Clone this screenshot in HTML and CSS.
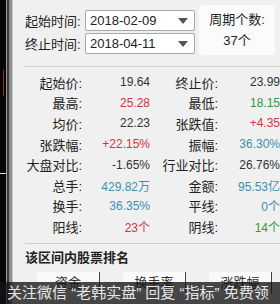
FILE: index.html
```html
<!DOCTYPE html>
<html lang="zh-CN">
<head>
    <meta charset="UTF-8">
    <meta name="viewport" content="width=device-width, initial-scale=1.0">
    <title>区间统计</title>
    <link rel="stylesheet" href="styles.css">
</head>
<body>

    <div class="window">
        <!-- Chart edge on the left -->
        <div class="chart-edge">
            <span class="chart-red"></span>
            <span class="chart-tick"></span>
        </div>
        <div class="edge-bar"></div>

        <div class="panel">
            <!-- Date range -->
            <div class="range">
                <div class="dates">
                    <div class="date-row">
                        <span class="date-label">起始时间:</span>
                        <div class="date-select">2018-02-09<span class="arrow"></span></div>
                    </div>
                    <div class="date-row">
                        <span class="date-label">终止时间:</span>
                        <div class="date-select">2018-04-11<span class="arrow"></span></div>
                    </div>
                </div>
                <div class="period-box">
                    <div>周期个数:</div>
                    <div>37个</div>
                </div>
            </div>

            <div class="divider"></div>

            <!-- Statistics -->
            <div class="stats">
                <span class="lbl">起始价:</span><span class="val">19.64</span>
                <span class="lbl">终止价:</span><span class="val">23.99</span>

                <span class="lbl">最高:</span><span class="val up">25.28</span>
                <span class="lbl">最低:</span><span class="val down">18.15</span>

                <span class="lbl">均价:</span><span class="val">22.23</span>
                <span class="lbl">张跌值:</span><span class="val up">+4.35</span>

                <span class="lbl">张跌幅:</span><span class="val up">+22.15%</span>
                <span class="lbl">振幅:</span><span class="val blue">36.30%</span>

                <span class="lbl">大盘对比:</span><span class="val">-1.65%</span>
                <span class="lbl">行业对比:</span><span class="val">26.76%</span>

                <span class="lbl">总手:</span><span class="val blue">429.82万</span>
                <span class="lbl">金额:</span><span class="val blue">95.53亿</span>

                <span class="lbl">换手:</span><span class="val blue">36.35%</span>
                <span class="lbl">平线:</span><span class="val blue">0个</span>

                <span class="lbl">阳线:</span><span class="val up">23个</span>
                <span class="lbl">阴线:</span><span class="val down">14个</span>
            </div>

            <div class="divider"></div>

            <!-- Ranking -->
            <div class="rank-title">该区间内股票排名</div>
            <div class="rank-head">
                <span>资金</span>
                <span>换手率</span>
                <span>涨跌幅</span>
            </div>
        </div>

        <!-- Watermark banner -->
        <div class="banner">关注微信 “老韩实盘” 回复 “指标” 免费领</div>
    </div>

</body>
</html>
```

FILE: styles.css
```css
/* Basic Styling */
body {
    margin: 0;
    padding: 0;
    font-family: "Liberation Sans", "Noto Sans CJK SC", sans-serif;
    font-size: 13px;
    color: #333;
    background-color: #f0f0f0;
}

.window {
    position: relative;
    display: flex;
    width: 280px;
    height: 304px;
    overflow: hidden;
}

.chart-edge {
    position: relative;
    flex-shrink: 0;
    width: 6px;
    background-color: #060606;
}

.chart-red {
    position: absolute;
    left: 3px;
    top: 70px;
    width: 1px;
    height: 26px;
    background-color: #a3262e;
}

.chart-tick {
    position: absolute;
    left: 0;
    top: 173px;
    width: 6px;
    height: 1px;
    background-color: #ddd;
}

.edge-bar {
    flex-shrink: 0;
    width: 7px;
    background: linear-gradient(to right, #9a9a9a 0, #9a9a9a 1px, #3a3a3a 1px, #3a3a3a 3px, #8d8d8d 3px, #8d8d8d 6px, #c8c8c8 6px);
}

.panel {
    flex: 1;
    min-width: 0;
    padding-left: 12px;
}

/* Date range */
.range {
    display: flex;
    height: 56px;
}

.dates {
    flex-shrink: 0;
    padding-top: 10px;
}

.date-row {
    display: flex;
    align-items: center;
    height: 20px;
    margin-bottom: 3px;
}

.date-label {
    width: 60px;
    font-size: 13px;
    white-space: nowrap;
    color: #222;
}

.date-select {
    position: relative;
    width: 104px;
    height: 19px;
    line-height: 19px;
    padding-left: 4px;
    border: 1px solid #a8a8a8;
    border-radius: 2px;
    background-color: white;
    font-size: 13px;
    color: #222;
}

.arrow {
    position: absolute;
    right: 6px;
    top: 7px;
    border-left: 5px solid transparent;
    border-right: 5px solid transparent;
    border-top: 6px solid #555;
}

.period-box {
    flex-shrink: 0;
    margin: 5px 0 0 4px;
    width: 76px;
    height: 50px;
    background-color: #fbfbfb;
    border-radius: 3px;
    text-align: center;
    font-size: 13px;
    line-height: 21px;
    padding-top: 4px;
    box-sizing: border-box;
    color: #222;
}

.divider {
    height: 1px;
    margin-top: 10px;
    background-color: #cfcfcf;
}

/* Statistics */
.stats {
    display: grid;
    grid-template-columns: 57px 68px 68px 62px;
    grid-auto-rows: 20.6px;
    align-items: center;
    padding-top: 5px;
}

.lbl {
    text-align: right;
    font-size: 13px;
    white-space: nowrap;
    color: #222;
}

.val {
    text-align: right;
    font-size: 12px;
    white-space: nowrap;
    color: #333;
}

.up {
    color: #d8323c;
}

.down {
    color: #2f9a3c;
}

.blue {
    color: #3d8fb0;
}

.stats + .divider {
    margin-top: 6px;
}

/* Ranking */
.rank-title {
    margin-top: 3px;
    font-size: 13px;
    font-weight: bold;
    color: #222;
}

.rank-head {
    display: flex;
    gap: 23px;
    margin: 6px 0 0 12px;
    height: 22px;
}

.rank-head span {
    flex-shrink: 0;
    width: 62px;
    text-align: center;
    line-height: 22px;
    background-color: #fafafa;
    border-right: 1px solid #444;
}

/* Watermark banner */
.banner {
    position: absolute;
    left: 0;
    right: 0;
    bottom: 0;
    height: 22px;
    line-height: 22px;
    padding-left: 7px;
    background-color: rgba(20, 20, 20, 0.78);
    color: #e6e6e6;
    font-size: 15px;
    white-space: nowrap;
}
```
